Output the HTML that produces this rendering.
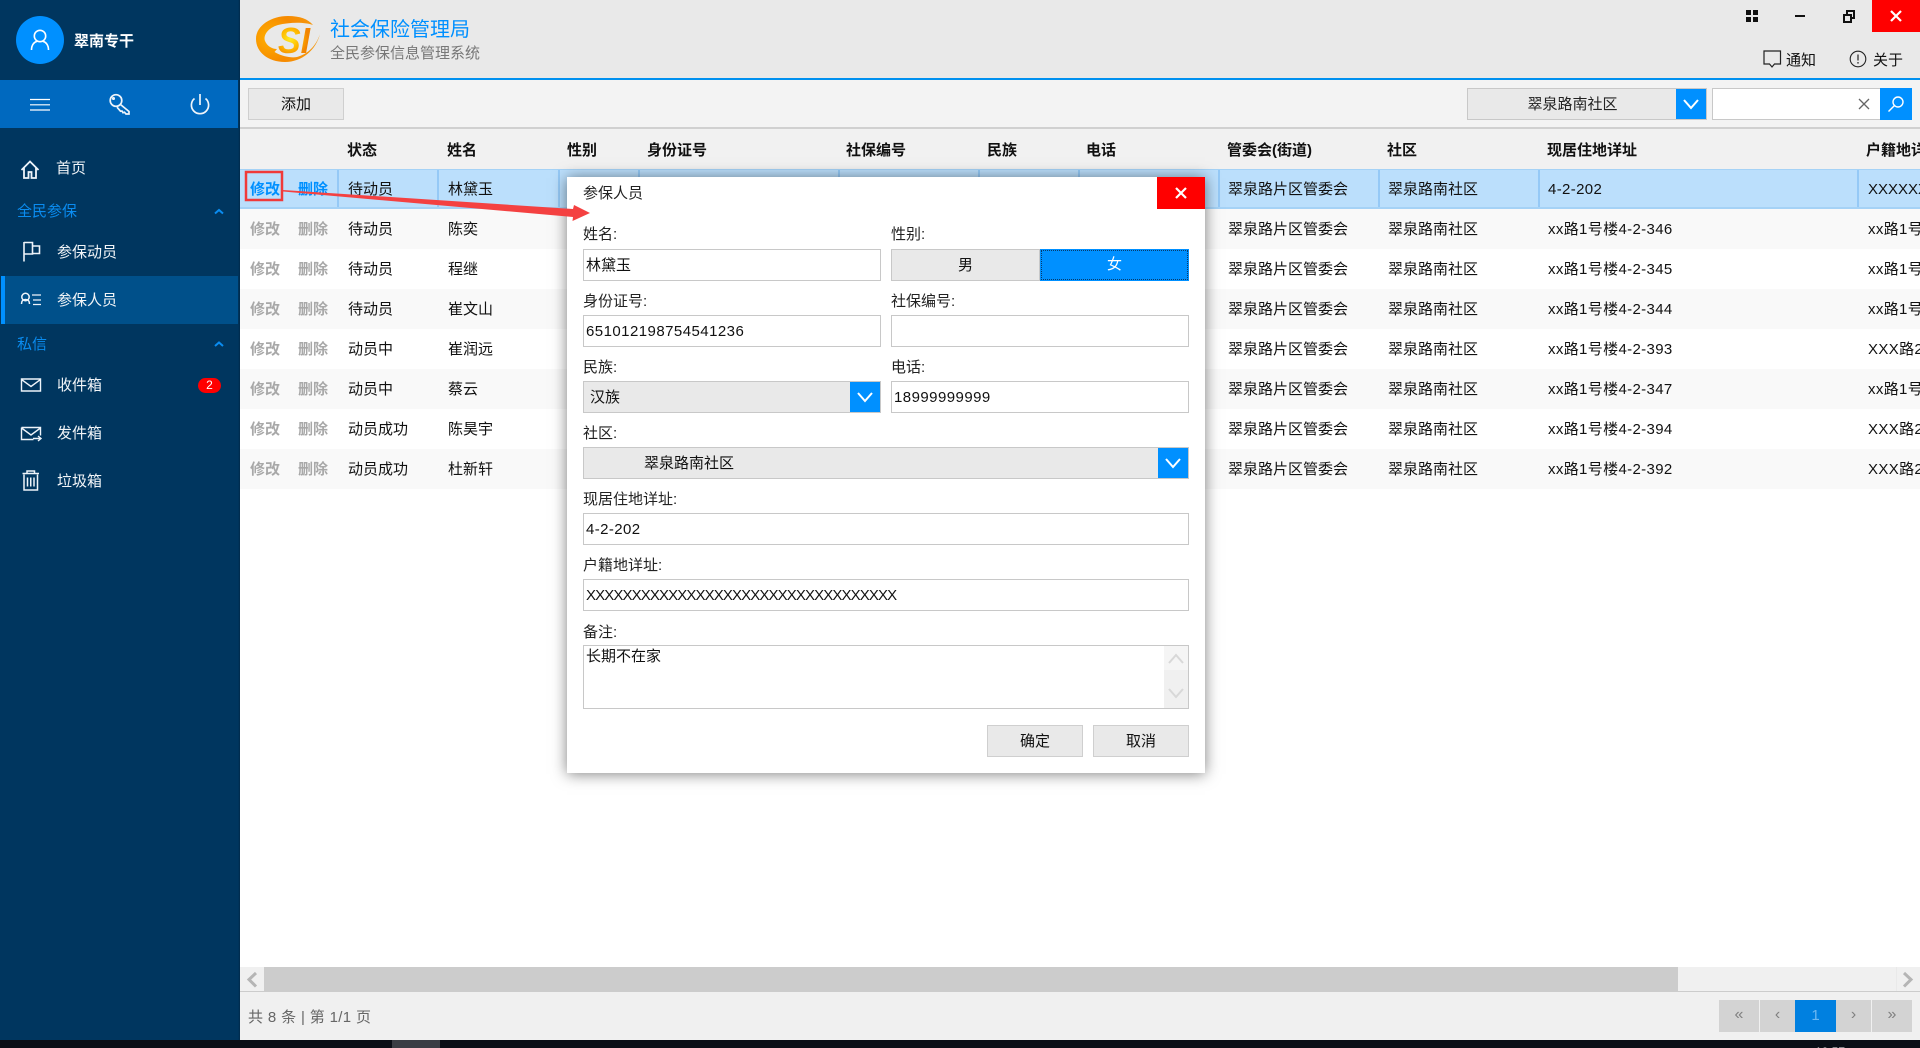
<!DOCTYPE html>
<html lang="zh-CN"><head><meta charset="utf-8"><title>社会保险管理局</title>
<style>
*{box-sizing:border-box;margin:0;padding:0}
html,body{width:1920px;height:1048px;overflow:hidden;background:#fff}
body{position:relative;font-family:"Liberation Sans","Noto Sans CJK SC",sans-serif;font-size:15px;color:#111}
.a{position:absolute}
.t{position:absolute;line-height:20px;height:20px;white-space:nowrap;transform:translateY(1px)}
svg{position:absolute;overflow:visible}
#side{left:0;top:0;width:240px;height:1040px;background:#00365f;z-index:2}
#side:after{content:"";position:absolute;right:0;top:0;width:2px;height:100%;background:linear-gradient(90deg,#00365f,#012a4a)}
#side .t{color:#f2f5f8}
#side .h{color:#0a8cf0}
#top{left:240px;top:0;width:1680px;height:80px;background:#e9e9e9;border-bottom:2px solid #0090ef}
#bar{left:240px;top:80px;width:1680px;height:49px;background:#f3f3f3;border-bottom:2px solid #d0d0d0}
#th{left:240px;top:129px;width:1680px;height:40px;background:#f1f1f1}
.b{font-weight:700;color:#111}
.r{position:absolute;left:240px;width:1680px;height:40px;overflow:hidden}
.r .t{top:10px}
.r.o{background:#f9f9f9}
.r.s{background:#bbdffc;height:40px;border-top:1px solid #a5d2f6;border-bottom:2px solid #a5d2f6}
.r.s .t{top:9px}
.e{color:#a8a8a8;font-weight:700}
.s .e{color:#0090ff}
.n{letter-spacing:.35px}
.c0{left:10px}.c1{left:58px}.c2{left:108px}.c3{left:208px}.c4{left:988px}.c5{left:1148px}.c6{left:1308px}.c7{left:1628px}
.d{position:absolute;top:0;width:2px;height:38px;background:#95c9f6}
.btn{position:absolute;background:#e9e9e9;border:1px solid #cfcfcf;text-align:center;line-height:32px;height:34px}
.in{position:absolute;background:#fff;border:1px solid #c8c8c8;height:32px;line-height:32px;padding-left:2px;white-space:nowrap;overflow:hidden}
.sel{position:absolute;background:#e9e9e9;border:1px solid #c8c8c8;height:32px;line-height:32px}
#dlg{left:567px;top:177px;width:638px;height:596px;background:#fff;box-shadow:0 1px 14px rgba(0,0,0,.5);z-index:3}
#dlg .l{position:absolute;line-height:20px;height:20px;white-space:nowrap;color:#222;transform:translateY(1px)}
.cb{position:absolute;background:#0090ff}
.pg{position:absolute;top:1000px;height:32px;background:#d3d3d3;color:#808080;text-align:center;line-height:30px;font-size:16px}
</style></head><body>

<div class="a" id="side">
  <div class="a" style="left:16px;top:16px;width:48px;height:48px;border-radius:50%;background:#0090ff"></div>
  <svg style="left:0;top:0" width="240" height="520" fill="none" stroke="#fff" stroke-width="1.6">
    <circle cx="40" cy="36" r="5.700"/><path d="M31.500 50c0-5.500 3-8.300 6-8.800M48.500 50c0-5.500-3-8.300-6-8.800"/>
  </svg>
  <div class="t" style="left:74px;top:31px;font-weight:700;color:#fff">翠南专干</div>
  <div class="a" style="left:0;top:80px;width:240px;height:48px;background:#0069bf"></div>
  <svg style="left:0;top:0;z-index:1" width="240" height="520" fill="none" stroke="#fff" stroke-width="1.2">
    <path d="M30 99.500h20M30 104.800h20M30 110h20"/>
    <g stroke="#eef4fa" stroke-width="1.700">
      <circle cx="116" cy="100.500" r="5.800"/><path d="M120.500 104.500l8.500 7v2.500h-3l-1.500-1.800-1.500.5-1-1.700-1.500.2-3.500-4"/><circle cx="113.500" cy="98.500" r=".7"/>
      <path d="M194.500 98.500a8.600 8.600 0 1 0 11 0M200 94v11"/>
      <path d="M21.500 170l8.500-8.500 8.500 8.500M24 168v10h4.500v-6h3v6H36v-10" stroke-width="1.800"/>
      <path d="M24 242v19.500M24 242.500h8.500v11.500H24M32.500 246h7v7.500h-7" stroke-width="1.600"/>
      <circle cx="25.500" cy="297" r="3.700" stroke-width="1.500"/><path d="M21.500 304c0-3.500 1.500-4.500 4-4.500s4 1 4 4.500" stroke-width="1.500"/>
      <path d="M32 295h9M33 300h8M33 304.500h8" stroke-width="1.300"/>
      <path d="M21.500 379h19v12h-19zM21.500 379.500l9.500 7 9.500-7" stroke-width="1.400"/>
      <path d="M21.500 427.500h19v8M33.500 439.500H21.500v-12M21.500 428l9.500 7 9.500-7M33 438.500h7.500M38 436l3 2.500-3 2.500" stroke-width="1.400"/>
      <path d="M24 474.500V490h13.500V474.500M22.500 473.500h16.500M27 473v-2h7.500v2M27.500 477.500v9M30.750 477.500v9M34 477.500v9" stroke-width="1.500"/>
    </g>
    <g stroke="#0a8cf0" stroke-width="2"><path d="M215 213.500l4-3.500 4 3.500M215 346l4-3.500 4 3.500"/></g>
  </svg>
  <div class="t" style="left:56px;top:158px">首页</div>
  <div class="t h" style="left:17px;top:201px">全民参保</div>
  <div class="t" style="left:57px;top:242px">参保动员</div>
  <div class="a" style="left:1px;top:276px;width:238px;height:48px;background:#00508a;border-left:4px solid #0090ff"></div>
  <div class="t" style="left:57px;top:290px">参保人员</div>
  <div class="t h" style="left:17px;top:334px">私信</div>
  <div class="t" style="left:57px;top:375px">收件箱</div>
  <div class="a" style="left:198px;top:378px;width:23px;height:15px;border-radius:8px;background:#f00;color:#fff;font-size:12px;line-height:15px;text-align:center">2</div>
  <div class="t" style="left:57px;top:423px">发件箱</div>
  <div class="t" style="left:57px;top:471px">垃圾箱</div>
</div>

<div class="a" id="top"></div>
<svg style="left:0;top:0" width="330" height="78">
  <defs>
    <radialGradient id="g" gradientUnits="userSpaceOnUse" cx="270" cy="38" r="50"><stop offset="0" stop-color="#ffb000"/><stop offset=".5" stop-color="#f68a00"/><stop offset="1" stop-color="#f59a10"/></radialGradient>
    <radialGradient id="g2" gradientUnits="userSpaceOnUse" cx="290" cy="39" r="18"><stop offset="0" stop-color="#ffec20"/><stop offset=".55" stop-color="#ffb800"/><stop offset="1" stop-color="#f28400"/></radialGradient>
  </defs>
  <path fill="url(#g)" d="M256 39C256 25 272 16 288 16C300 16 308 19 313 25C305 22 290 22 278 25C268 28 263 35 265 41C267 46 272 49 277 49L274.500 52C283 57 292 58 297 57C308 54 316 46 320 34C316 50 302 62 285 62C268 62 256 52 256 39Z"/>
  <text x="278" y="53" font-family="Liberation Sans" font-weight="700" font-style="italic" font-size="36" fill="url(#g2)" textLength="32" lengthAdjust="spacingAndGlyphs">SI</text>
</svg>
<div class="t" style="left:330px;top:18px;font-size:20px;line-height:24px;height:24px;color:#0090ff;transform:none">社会保险管理局</div>
<div class="t" style="left:330px;top:43px;color:#777">全民参保信息管理系统</div>

<div class="a" style="left:1872px;top:0;width:48px;height:32px;background:#f00"></div>
<svg style="left:0;top:0" width="1920" height="80" fill="none">
  <path d="M1746 10h5v5h-5zM1753 10h5v5h-5zM1746 17h5v5h-5zM1753 17h5v5h-5z" fill="#111"/>
  <path d="M1795 16h10" stroke="#111" stroke-width="2"/>
  <path d="M1844 15h7v7h-7zM1847 14v-3h7v7h-3" stroke="#111" stroke-width="2"/>
  <path d="M1891 11l10 10M1901 11l-10 10" stroke="#fff" stroke-width="2.200"/>
  <path d="M1764 51h16.500v13h-6l-2.500 3-2.500-3h-5.500z" stroke="#222" stroke-width="1.200"/>
  <circle cx="1858" cy="59" r="7.800" stroke="#222" stroke-width="1.100"/>
  <path d="M1858 54.500v6M1858 62v1.600" stroke="#222" stroke-width="1.200"/>
</svg>
<div class="t" style="left:1786px;top:50px">通知</div>
<div class="t" style="left:1873px;top:50px">关于</div>

<div class="a" id="bar"></div>
<div class="btn" style="left:248px;top:88px;width:96px;height:32px;line-height:32px">添加</div>
<div class="sel" style="left:1467px;top:88px;width:240px;text-align:center;padding-right:29px;color:#222">翠泉路南社区</div>
<div class="cb" style="left:1676px;top:89px;width:30px;height:30px"></div>
<div class="a" style="left:1712px;top:88px;width:169px;height:32px;background:#fff;border:1px solid #c8c8c8"></div>
<div class="a" style="left:1880px;top:88px;width:32px;height:32px;background:#0090ff"></div>
<svg style="left:0;top:0;z-index:1" width="1920" height="130" fill="none">
  <path d="M1684 100l7 8 7-8" stroke="#fff" stroke-width="2"/>
  <path d="M1859 99l10 10M1869 99l-10 10" stroke="#666" stroke-width="1.300"/>
  <circle cx="1898" cy="102" r="5" stroke="#fff" stroke-width="1.400"/><path d="M1894.500 105.500l-6 6" stroke="#fff" stroke-width="1.400"/>
</svg>

<div class="a" id="th"></div>
<div class="t b" style="left:347px;top:140px">状态</div>
<div class="t b" style="left:447px;top:140px">姓名</div>
<div class="t b" style="left:567px;top:140px">性别</div>
<div class="t b" style="left:647px;top:140px">身份证号</div>
<div class="t b" style="left:846px;top:140px">社保编号</div>
<div class="t b" style="left:987px;top:140px">民族</div>
<div class="t b" style="left:1086px;top:140px">电话</div>
<div class="t b" style="left:1227px;top:140px">管委会(街道)</div>
<div class="t b" style="left:1387px;top:140px">社区</div>
<div class="t b" style="left:1547px;top:140px">现居住地详址</div>
<div class="t b" style="left:1866px;top:140px">户籍地详址</div>

<div class="r s" style="top:169px">
  <i class="d" style="left:97px"></i><i class="d" style="left:197px"></i><i class="d" style="left:318px"></i><i class="d" style="left:398px"></i><i class="d" style="left:598px"></i><i class="d" style="left:738px"></i><i class="d" style="left:838px"></i><i class="d" style="left:978px"></i><i class="d" style="left:1138px"></i><i class="d" style="left:1298px"></i><i class="d" style="left:1617px"></i>
  <span class="t e c0">修改</span><span class="t e c1">删除</span><span class="t c2">待动员</span><span class="t c3">林黛玉</span><span class="t c4">翠泉路片区管委会</span><span class="t c5">翠泉路南社区</span><span class="t c6 n">4-2-202</span><span class="t c7">XXXXXXXXXXXXX</span>
</div>
<div class="r o" style="top:209px"><span class="t e c0">修改</span><span class="t e c1">删除</span><span class="t c2">待动员</span><span class="t c3">陈奕</span><span class="t c4">翠泉路片区管委会</span><span class="t c5">翠泉路南社区</span><span class="t c6 n">xx路1号楼4-2-346</span><span class="t c7 n">xx路1号楼</span></div>
<div class="r" style="top:249px"><span class="t e c0">修改</span><span class="t e c1">删除</span><span class="t c2">待动员</span><span class="t c3">程继</span><span class="t c4">翠泉路片区管委会</span><span class="t c5">翠泉路南社区</span><span class="t c6 n">xx路1号楼4-2-345</span><span class="t c7 n">xx路1号楼</span></div>
<div class="r o" style="top:289px"><span class="t e c0">修改</span><span class="t e c1">删除</span><span class="t c2">待动员</span><span class="t c3">崔文山</span><span class="t c4">翠泉路片区管委会</span><span class="t c5">翠泉路南社区</span><span class="t c6 n">xx路1号楼4-2-344</span><span class="t c7 n">xx路1号楼</span></div>
<div class="r" style="top:329px"><span class="t e c0">修改</span><span class="t e c1">删除</span><span class="t c2">动员中</span><span class="t c3">崔润远</span><span class="t c4">翠泉路片区管委会</span><span class="t c5">翠泉路南社区</span><span class="t c6 n">xx路1号楼4-2-393</span><span class="t c7 n">XXX路2号楼</span></div>
<div class="r o" style="top:369px"><span class="t e c0">修改</span><span class="t e c1">删除</span><span class="t c2">动员中</span><span class="t c3">蔡云</span><span class="t c4">翠泉路片区管委会</span><span class="t c5">翠泉路南社区</span><span class="t c6 n">xx路1号楼4-2-347</span><span class="t c7 n">xx路1号楼</span></div>
<div class="r" style="top:409px"><span class="t e c0">修改</span><span class="t e c1">删除</span><span class="t c2">动员成功</span><span class="t c3">陈昊宇</span><span class="t c4">翠泉路片区管委会</span><span class="t c5">翠泉路南社区</span><span class="t c6 n">xx路1号楼4-2-394</span><span class="t c7 n">XXX路2号楼</span></div>
<div class="r o" style="top:449px"><span class="t e c0">修改</span><span class="t e c1">删除</span><span class="t c2">动员成功</span><span class="t c3">杜新轩</span><span class="t c4">翠泉路片区管委会</span><span class="t c5">翠泉路南社区</span><span class="t c6 n">xx路1号楼4-2-392</span><span class="t c7 n">XXX路2号楼</span></div>

<!-- horizontal scrollbar -->
<div class="a" style="left:240px;top:967px;width:1680px;height:25px;background:#f0f0f0;border-bottom:1px solid #ccc"></div>
<div class="a" style="left:264px;top:967px;width:1414px;height:25px;background:#ccc"></div>
<svg style="left:0;top:0" width="1920" height="1048" fill="none"><path d="M256 973l-7 6.500 7 7" stroke="#b5b5b5" stroke-width="3"/><path d="M1904 973l7 6.500-7 7" stroke="#b5b5b5" stroke-width="3"/></svg>
<div class="a" style="left:1896px;top:967px;width:0;height:24px;border-left:1px solid #e9e9e9"></div>

<!-- footer -->
<div class="a" style="left:240px;top:992px;width:1680px;height:48px;background:#f0f0f0"></div>
<div class="t" style="left:248px;top:1007px;color:#666;letter-spacing:.35px">共 8 条 | 第 1/1 页</div>
<div class="pg" style="left:1719px;width:40px">«</div>
<div class="pg" style="left:1760px;width:35px">‹</div>
<div class="pg" style="left:1795px;width:41px;background:#0080e0;color:#6cb8f2;font-size:15px;line-height:32px">1</div>
<div class="pg" style="left:1836px;width:35px">›</div>
<div class="pg" style="left:1872px;width:40px">»</div>

<!-- taskbar -->
<div class="a" style="left:0;top:1040px;width:1920px;height:8px;background:#0a0e16;overflow:hidden;z-index:4">
  <div class="a" style="left:392px;top:0;width:48px;height:8px;background:#3a3d44"></div>
  <div class="t" style="left:1815px;top:4px;color:#fff;font-size:12px;line-height:14px">10:57</div>
</div>

<!-- dialog -->
<div class="a" id="dlg">
  <div class="l" style="left:16px;top:6px">参保人员</div>
  <div class="a" style="left:590px;top:0;width:48px;height:32px;background:#f00"></div>
  <svg style="left:0;top:0" width="638" height="596" fill="none">
    <path d="M609 11l10 10M619 11l-10 10" stroke="#fff" stroke-width="2.200"/>
  </svg>
  <div class="l" style="left:16px;top:47px">姓名:</div>
  <div class="l" style="left:324px;top:47px">性别:</div>
  <div class="in" style="left:16px;top:72px;width:298px">林黛玉</div>
  <div class="a" style="left:324px;top:72px;width:149px;height:32px;background:#e9e9e9;border:1px solid #c8c8c8;text-align:center;line-height:32px">男</div>
  <div class="a" style="left:473px;top:72px;width:149px;height:32px;background:#0090ff;color:#fff;text-align:center;line-height:32px;outline:1px dotted #063a6a;outline-offset:-2px">女</div>
  <div class="l" style="left:16px;top:114px">身份证号:</div>
  <div class="l" style="left:324px;top:114px">社保编号:</div>
  <div class="in" style="left:16px;top:138px;width:298px;letter-spacing:.45px">651012198754541236</div>
  <div class="in" style="left:324px;top:138px;width:298px"></div>
  <div class="l" style="left:16px;top:180px">民族:</div>
  <div class="l" style="left:324px;top:180px">电话:</div>
  <div class="sel" style="left:16px;top:204px;width:298px;padding-left:6px">汉族</div>
  <div class="cb" style="left:283px;top:205px;width:30px;height:30px"></div>
  <div class="in" style="left:324px;top:204px;width:298px;letter-spacing:.45px">18999999999</div>
  <div class="l" style="left:16px;top:246px">社区:</div>
  <div class="sel" style="left:16px;top:270px;width:606px;padding-left:60px">翠泉路南社区</div>
  <div class="cb" style="left:591px;top:271px;width:30px;height:30px"></div>
  <svg style="left:0;top:0;z-index:1" width="638" height="596" fill="none"><path d="M291 216l7 8 7-8M599 282l7 8 7-8" stroke="#fff" stroke-width="2"/></svg>
  <div class="l" style="left:16px;top:312px">现居住地详址:</div>
  <div class="in" style="left:16px;top:336px;width:606px;letter-spacing:.4px">4-2-202</div>
  <div class="l" style="left:16px;top:378px">户籍地详址:</div>
  <div class="in" style="left:16px;top:402px;width:606px;letter-spacing:-.88px">XXXXXXXXXXXXXXXXXXXXXXXXXXXXXXXXXX</div>
  <div class="l" style="left:16px;top:445px">备注:</div>
  <div class="a" style="left:16px;top:468px;width:606px;height:64px;background:#fff;border:1px solid #c8c8c8;padding:1px 2px 0;line-height:20px">长期不在家</div>
  <div class="a" style="left:597px;top:469px;width:24px;height:62px;background:#f0f0f0"></div>
  <div class="a" style="left:597px;top:469px;width:24px;height:24px;background:#f5f5f5"></div>
  <svg style="left:0;top:0;z-index:1" width="638" height="596" fill="none"><path d="M602 486l7-8 7 8M602 512l7 8 7-8" stroke="#d8d8d8" stroke-width="2"/></svg>
  <div class="btn" style="left:420px;top:548px;width:96px;height:32px;line-height:32px">确定</div>
  <div class="btn" style="left:526px;top:548px;width:96px;height:32px;line-height:32px">取消</div>
</div>

<!-- annotation -->
<svg style="left:0;top:0;z-index:5" width="1920" height="1048">
  <rect x="246" y="172" width="36" height="28" fill="none" stroke="#f03a3a" stroke-width="2.500"/>
  <polygon fill="#f44141" points="283,190 573,209 574,205 590,213 572.500,221 573,217 283,191.500"/>
</svg>
</body></html>
